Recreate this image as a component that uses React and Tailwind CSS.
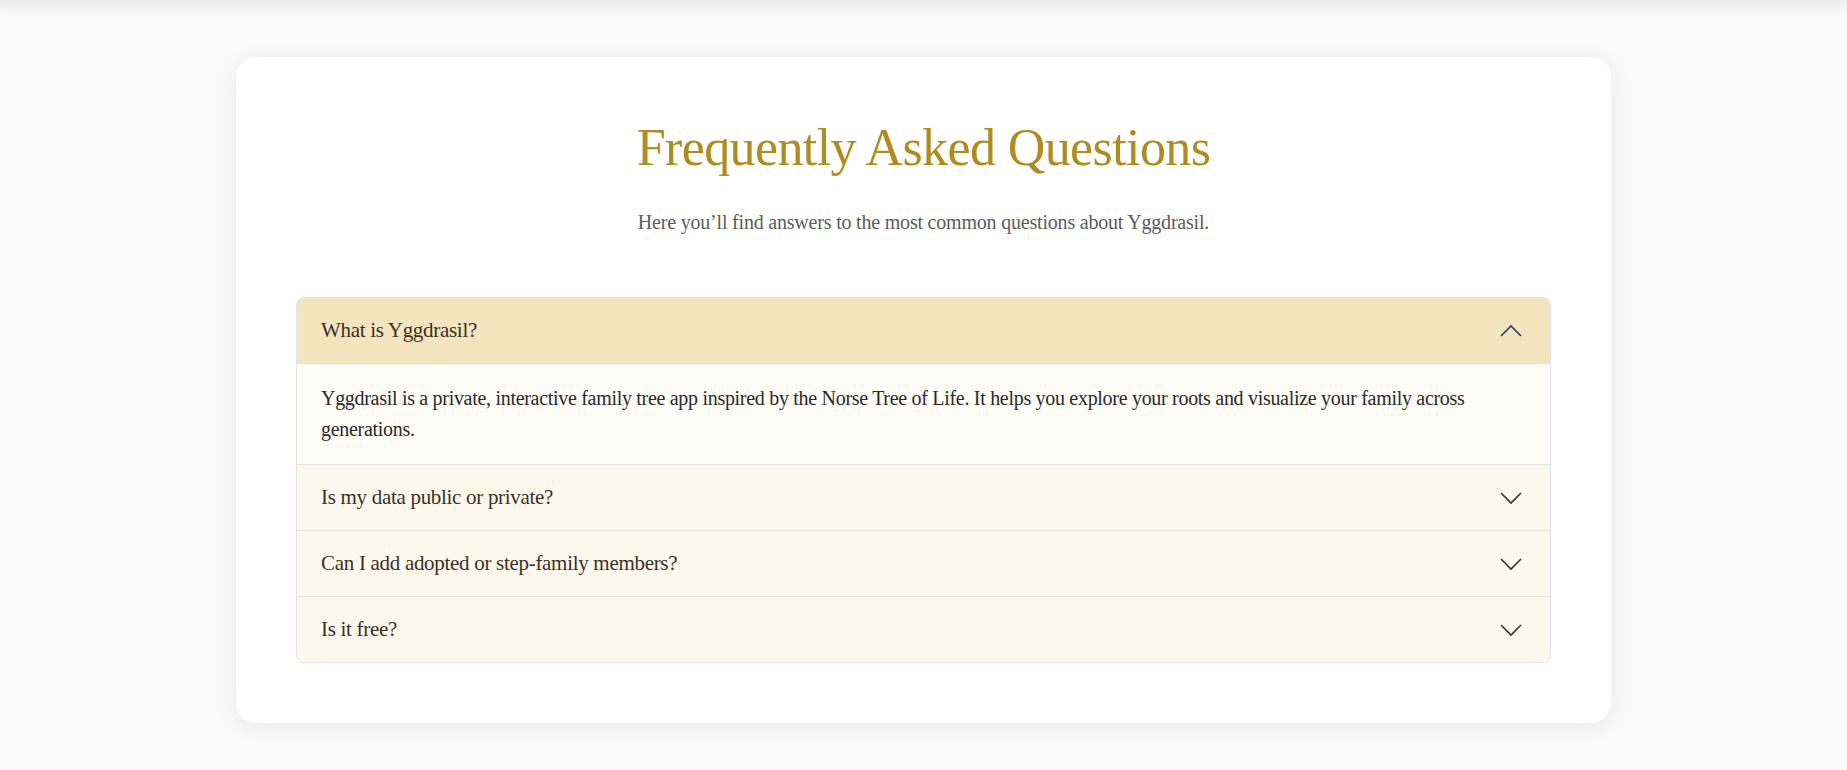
import React, { useState } from 'react';

const faqs = [
  {
    q: 'What is Yggdrasil?',
    a: 'Yggdrasil is a private, interactive family tree app inspired by the Norse Tree of Life. It helps you explore your roots and visualize your family across generations.',
  },
  {
    q: 'Is my data public or private?',
    a: 'Your tree is private by default. Only people you invite can see it.',
  },
  {
    q: 'Can I add adopted or step-family members?',
    a: 'Yes. Relationships can be marked as biological, adopted or step-family.',
  },
  {
    q: 'Is it free?',
    a: 'Yggdrasil is free to use for personal family trees.',
  },
];

function Chevron({ open }) {
  return (
    <svg
      className={open ? 'w-6 h-6 text-[#1f3f6e]' : 'w-6 h-6 text-[#333333]'}
      fill="none"
      stroke="currentColor"
      viewBox="0 0 24 24"
    >
      <path strokeWidth={1.6} d={open ? 'M2 17l10-10 10 10' : 'M2 7l10 10 10-10'} />
    </svg>
  );
}

export default function App() {
  const [openIndex, setOpenIndex] = useState(0);

  return (
    <div className="min-h-screen bg-[#fafafa] font-['Liberation_Serif',serif]">
      {/* shadow of header above */}
      <div className="h-0 shadow-[0_0_14px_4px_rgba(0,0,0,0.12)]" />

      <div className="pt-[57px] pb-12">
        <section className="w-[1375px] mx-auto bg-white rounded-[20px] shadow-[0_4px_24px_rgba(0,0,0,0.07)] px-[60px] pt-[59px] pb-[60px]">
          <h1 className="text-center text-[52px] leading-[64px] tracking-[-0.6px] text-[#b08c1e]">
            Frequently Asked Questions
          </h1>
          <p className="mt-[28px] text-center text-[20px] leading-7 tracking-[-0.2px] text-[#5b5b5b]">
            Here you&#8217;ll find answers to the most common questions about Yggdrasil.
          </p>

          <div className="mt-[61px] border border-[#e2e3e6] rounded-lg overflow-hidden">
            {faqs.map((item, i) => {
              const open = openIndex === i;
              return (
                <div key={item.q} className={i > 0 ? 'border-t border-[#e2e3e6]' : ''}>
                  <button
                    onClick={() => setOpenIndex(open ? -1 : i)}
                    className={
                      open
                        ? 'w-full flex items-center justify-between pl-[24px] pr-[26px] h-[65px] bg-[#f3e6bf] text-left'
                        : 'w-full flex items-center justify-between pl-[24px] pr-[26px] h-[65px] bg-[#fcf8ec] text-left'
                    }
                  >
                    <span className="text-[21px] tracking-[-0.3px] text-[#3d3027]">{item.q}</span>
                    <span className="mr-[1px]">
                      <Chevron open={open} />
                    </span>
                  </button>
                  {open && (
                    <div className="border-t border-[#e2e3e6] bg-[#fdfcf7] pl-[24px] pr-[60px] pt-[19px] pb-[19px] text-[20px] leading-[31px] tracking-[-0.3px] text-[#2a2a2a]">
                      {item.a}
                    </div>
                  )}
                </div>
              );
            })}
          </div>
        </section>
      </div>
    </div>
  );
}
